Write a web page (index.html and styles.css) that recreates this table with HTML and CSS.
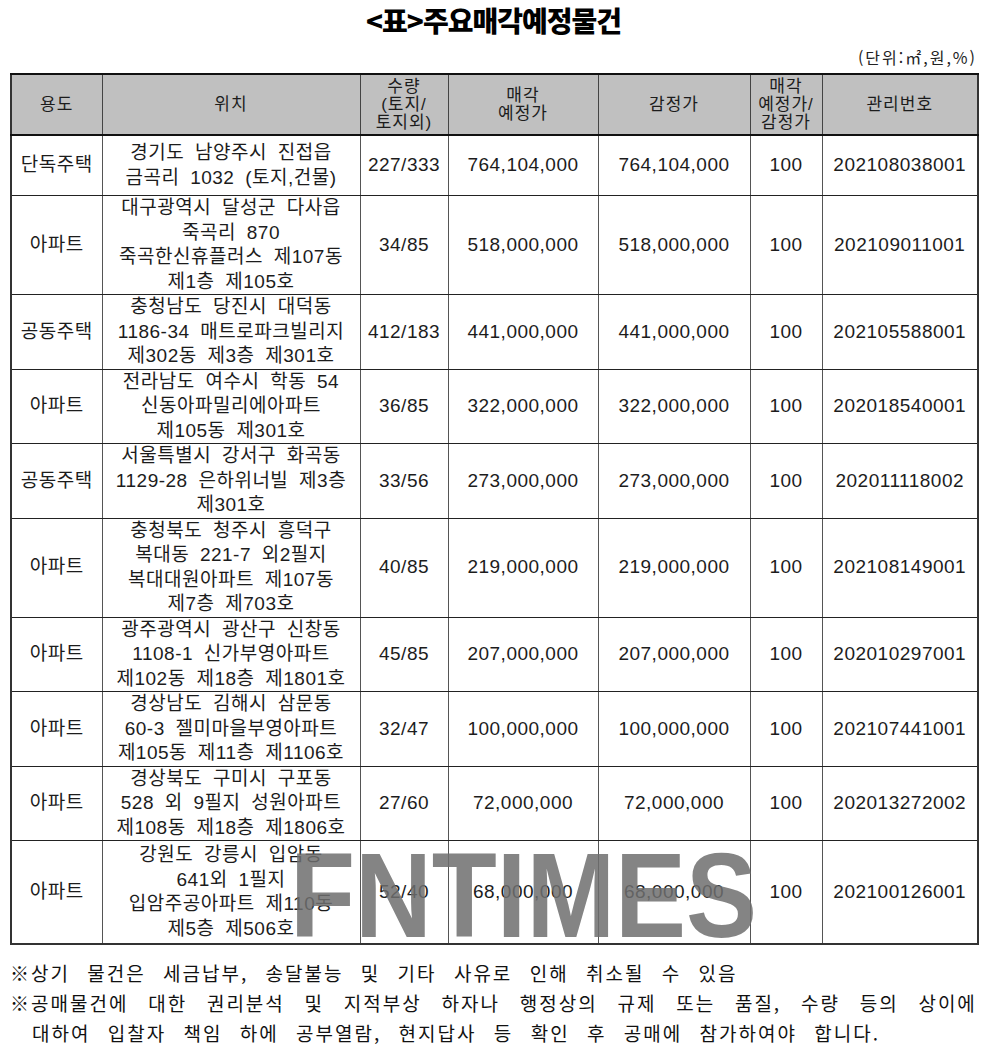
FILE: index.html
```html
<!DOCTYPE html>
<html lang="ko">
<head>
<meta charset="utf-8">
<title>주요매각예정물건</title>
<link rel="stylesheet" href="styles.css">
</head>
<body>
<div class="page">
  <h1 class="title">&lt;표&gt;주요매각예정물건</h1>
  <div class="unit">(단위:㎡,원,%)</div>
  <div class="table-wrap">
    <table class="grid">
      <colgroup>
        <col class="c1"><col class="c2"><col class="c3"><col class="c4"><col class="c5"><col class="c6"><col class="c7">
      </colgroup>
      <thead>
        <tr>
          <th>용도</th>
          <th>위치</th>
          <th>수량<br>(토지/<br>토지외)</th>
          <th>매각<br>예정가</th>
          <th>감정가</th>
          <th>매각<br>예정가/<br>감정가</th>
          <th>관리번호</th>
        </tr>
      </thead>
      <tbody>
        <tr class="r2">
          <td>단독주택</td>
          <td>경기도 남양주시 진접읍<br>금곡리 1032 (토지,건물)</td>
          <td>227/333</td><td>764,104,000</td><td>764,104,000</td><td>100</td><td>202108038001</td>
        </tr>
        <tr>
          <td>아파트</td>
          <td>대구광역시 달성군 다사읍<br>죽곡리 870<br>죽곡한신휴플러스 제107동<br>제1층 제105호</td>
          <td>34/85</td><td>518,000,000</td><td>518,000,000</td><td>100</td><td>202109011001</td>
        </tr>
        <tr>
          <td>공동주택</td>
          <td>충청남도 당진시 대덕동<br>1186-34 매트로파크빌리지<br>제302동 제3층 제301호</td>
          <td>412/183</td><td>441,000,000</td><td>441,000,000</td><td>100</td><td>202105588001</td>
        </tr>
        <tr>
          <td>아파트</td>
          <td>전라남도 여수시 학동 54<br>신동아파밀리에아파트<br>제105동 제301호</td>
          <td>36/85</td><td>322,000,000</td><td>322,000,000</td><td>100</td><td>202018540001</td>
        </tr>
        <tr>
          <td>공동주택</td>
          <td>서울특별시 강서구 화곡동<br>1129-28 은하위너빌 제3층<br>제301호</td>
          <td>33/56</td><td>273,000,000</td><td>273,000,000</td><td>100</td><td>202011118002</td>
        </tr>
        <tr>
          <td>아파트</td>
          <td>충청북도 청주시 흥덕구<br>복대동 221-7 외2필지<br>복대대원아파트 제107동<br>제7층 제703호</td>
          <td>40/85</td><td>219,000,000</td><td>219,000,000</td><td>100</td><td>202108149001</td>
        </tr>
        <tr>
          <td>아파트</td>
          <td>광주광역시 광산구 신창동<br>1108-1 신가부영아파트<br>제102동 제18층 제1801호</td>
          <td>45/85</td><td>207,000,000</td><td>207,000,000</td><td>100</td><td>202010297001</td>
        </tr>
        <tr>
          <td>아파트</td>
          <td>경상남도 김해시 삼문동<br>60-3 젤미마을부영아파트<br>제105동 제11층 제1106호</td>
          <td>32/47</td><td>100,000,000</td><td>100,000,000</td><td>100</td><td>202107441001</td>
        </tr>
        <tr>
          <td>아파트</td>
          <td>경상북도 구미시 구포동<br>528 외 9필지 성원아파트<br>제108동 제18층 제1806호</td>
          <td>27/60</td><td>72,000,000</td><td>72,000,000</td><td>100</td><td>202013272002</td>
        </tr>
        <tr class="last">
          <td>아파트</td>
          <td>강원도 강릉시 입암동<br>641외 1필지<br>입암주공아파트 제110동<br>제5층 제506호</td>
          <td>52/40</td><td>68,000,000</td><td>68,000,000</td><td>100</td><td>202100126001</td>
        </tr>
      </tbody>
    </table>
    <svg class="watermark" width="480" height="100" viewBox="0 0 480 100" aria-label="FNTIMES">
      <text x="0" y="89" textLength="467" lengthAdjust="spacingAndGlyphs" font-family="Liberation Sans, Arial, sans-serif" font-weight="bold" font-size="121" fill="#6e6e6e" fill-opacity="0.85">FNTIMES</text>
    </svg>
  </div>
  <div class="notes">
    <div class="note">※상기 물건은 세금납부, 송달불능 및 기타 사유로 인해 취소될 수 있음</div>
    <div class="note spread">
      <span>※공매물건에</span><span>대한</span><span>권리분석</span><span>및</span><span>지적부상</span><span>하자나</span><span>행정상의</span><span>규제</span><span>또는</span><span>품질,</span><span>수량</span><span>등의</span><span>상이에</span>
    </div>
    <div class="note cont">대하여 입찰자 책임 하에 공부열람, 현지답사 등 확인 후 공매에 참가하여야 합니다.</div>
  </div>
</div>
</body>
</html>
```

FILE: styles.css
```css
html, body {
  margin: 0;
  padding: 0;
  background: #ffffff;
}

body {
  font-family: "Liberation Sans", "Noto Sans CJK KR", sans-serif;
  color: #1c1c1c;
}

.page {
  width: 967px;
  padding-left: 10px;
}

.title {
  margin: 0;
  height: 40px;
  font-family: "Noto Sans CJK KR", sans-serif;
  font-size: 28px;
  font-weight: 900;
  line-height: 40px;
  letter-spacing: -1px;
  text-align: center;
  color: #000;
}

.unit {
  text-align: right;
  font-family: "Noto Sans CJK KR", sans-serif;
  font-size: 16px;
  line-height: 20px;
  letter-spacing: 2px;
  margin-top: 7px;
  margin-bottom: 6px;
  color: #222;
}

.table-wrap {
  position: relative;
}

.grid {
  width: 967px;
  border-collapse: collapse;
  table-layout: fixed;
  font-size: 19px;
  letter-spacing: 0.5px;
  word-spacing: 5px;
  border: 2px solid #333;
}

.c1 { width: 91px; }
.c2 { width: 258px; }
.c3 { width: 88px; }
.c4 { width: 150px; }
.c5 { width: 152px; }
.c6 { width: 72px; }
.c7 { width: 156px; }

.grid th {
  background: #c0c0c0;
  font-weight: normal;
  font-size: 17px;
  letter-spacing: 1px;
  height: 59px;
  padding: 0;
  line-height: 18px;
  text-align: center;
  vertical-align: middle;
  border-left: 1px solid #444;
  border-right: 1px solid #444;
  border-top: 2px solid #111;
  border-bottom: 2px solid #111;
}

.grid td {
  padding: 0;
  line-height: 24.5px;
  text-align: center;
  vertical-align: middle;
  border-left: 1px solid #555;
  border-right: 1px solid #555;
  border-top: 1px solid #222;
  border-bottom: 1px solid #222;
  white-space: nowrap;
}

.grid tr.r2 td {
  height: 59px;
}

.grid tr.last td {
  height: 102px;
}

.watermark {
  position: absolute;
  left: 280px;
  top: 775px;
  pointer-events: none;
}

.notes {
  padding-top: 13px;
  font-family: "Noto Sans CJK KR", sans-serif;
  font-size: 19px;
  letter-spacing: 2px;
  word-spacing: 10px;
  line-height: 30px;
  color: #111;
}

.note {
  white-space: nowrap;
}

.note.spread {
  display: flex;
  justify-content: space-between;
  width: 967px;
}

.note.cont {
  padding-left: 22px;
}
```
